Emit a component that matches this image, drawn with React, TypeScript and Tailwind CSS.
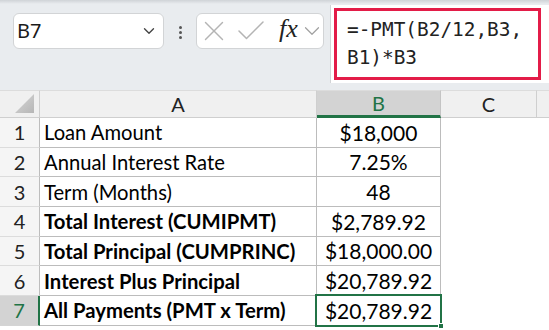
import { X, Check, ChevronDown } from "lucide-react";

const rows = [
	{ n: 1, label: "Loan Amount", value: "$18,000", bold: false },
	{ n: 2, label: "Annual Interest Rate", value: "7.25%", bold: false },
	{ n: 3, label: "Term (Months)", value: "48", bold: false },
	{ n: 4, label: "Total Interest (CUMIPMT)", value: "$2,789.92", bold: true },
	{ n: 5, label: "Total Principal (CUMPRINC)", value: "$18,000.00", bold: true },
	{ n: 6, label: "Interest Plus Principal", value: "$20,789.92", bold: true },
	{ n: 7, label: "All Payments (PMT x Term)", value: "$20,789.92", bold: true },
];

const cellFont = { fontFamily: "Lato, 'Open Sans', sans-serif" };

export default function App() {
	return (
		<div className="relative w-[549px] h-[330px] overflow-hidden bg-white">
			{/* Formula bar area */}
			<div className="relative h-[90px] bg-[#e9ecef] flex items-start">
				<div className="absolute top-0 left-0 right-0 h-[4px] bg-gradient-to-b from-[#cfd3d7] to-transparent" />

				{/* Name box */}
				<div className="ml-[13px] mt-[13px] w-[151px] h-[36px] bg-white border border-[#d2d4d6] rounded-[6px] flex items-center pl-[3px] pr-[5px]">
					<span className="flex-1 text-[20px] text-[#1a1a1a]" style={{ fontFamily: "'Noto Sans', sans-serif" }}>
						B7
					</span>
					<ChevronDown size={18} className="text-[#444]" strokeWidth={1.8} />
				</div>

				{/* Kebab dots */}
				<div className="mt-[26px] w-[32px] flex flex-col items-center gap-[2px]">
					<span className="w-[3px] h-[3px] rounded-full bg-[#555]" />
					<span className="w-[3px] h-[3px] rounded-full bg-[#555]" />
					<span className="w-[3px] h-[3px] rounded-full bg-[#555]" />
				</div>

				{/* Cancel / enter / fx */}
				<div className="mt-[13px] w-[128px] h-[36px] bg-white border border-[#d2d4d6] rounded-[6px] flex items-center">
					<X size={34} className="shrink-0 text-[#b4b4b4]" strokeWidth={1} />
					<Check size={36} className="shrink-0 ml-[2px] text-[#b4b4b4]" strokeWidth={1} />
					<span
						className="ml-[10px] text-[26px] italic text-[#222] leading-none -mt-[4px]"
						style={{ fontFamily: "'Liberation Serif', serif" }}
					>
						fx
					</span>
					<ChevronDown size={26} className="shrink-0 ml-[1px] text-[#a0a0a0]" strokeWidth={1.1} />
				</div>

				{/* Formula input */}
				<div className="ml-[6px] mt-[5px] flex-1 h-[78px] bg-white border-l border-[#d2d4d6] pt-[3px] pl-[3px]">
					<div className="w-[207px] h-[72px] border-[3px] border-[#e31c48] pl-[10px] pt-[5px]">
						<p
							className="text-[19.4px] leading-[28px] text-[#222] whitespace-pre"
							style={{ fontFamily: "'DejaVu Sans Mono', monospace" }}
						>
							{"=-PMT(B2/12,B3,\nB1)*B3"}
						</p>
					</div>
				</div>
			</div>

			{/* Grid */}
			<div className="grid grid-cols-[40px_277px_124px_96px_12px]" style={cellFont}>
				{/* Column headers */}
				<div className="h-[28px] bg-[#f0f0f0] border-r border-b border-[#cfcfcf] border-t border-t-[#dcdcdc] relative">
					<div
						className="absolute right-[5px] bottom-[4px] w-[19px] h-[19px] bg-gradient-to-br from-[#d8d8d8] to-[#b6b6b6]"
						style={{ clipPath: "polygon(100% 0, 100% 100%, 0 100%)" }}
					/>
				</div>
				<div className="h-[28px] bg-[#f0f0f0] border-r border-b border-t border-[#cfcfcf] border-t-[#dcdcdc] flex items-center justify-center text-[20px] text-[#222]">
					A
				</div>
				<div className="h-[28px] bg-[#d3d3d3] border-r border-t border-[#c4c4c4] border-t-[#dcdcdc] border-b-[3px] border-b-[#217346] flex items-center justify-center text-[20px] text-[#217346]">
					B
				</div>
				<div className="h-[28px] bg-[#f0f0f0] border-r border-b border-t border-[#cfcfcf] border-t-[#dcdcdc] flex items-center justify-center text-[20px] text-[#222]">
					C
				</div>
				<div className="h-[28px] bg-[#f0f0f0] border-b border-t border-[#cfcfcf] border-t-[#dcdcdc]" />

				{rows.map((r) => {
					const active = r.n === 7;
					return (
						<div key={r.n} className="contents">
							<div
								className={
									active
										? "h-[29.7px] bg-[#d3d3d3] border-r-2 border-r-[#217346] border-b border-b-[#d4d4d4] flex items-center justify-center text-[20px] text-[#217346]"
										: "h-[29.7px] bg-[#f5f5f5] border-r border-r-[#bdbdbd] border-b border-b-[#dcdcdc] flex items-center justify-center text-[20px] text-[#222]"
								}
							>
								{r.n}
							</div>
							<div
								className={
									r.bold
										? "h-[29.7px] border-r border-b border-[#bcbcbc] flex items-center pl-[4px] text-black whitespace-nowrap font-bold text-[20.3px]"
										: "h-[29.7px] border-r border-b border-[#bcbcbc] flex items-center pl-[4px] text-black whitespace-nowrap text-[20.2px]"
								}
							>
								{r.label}
							</div>
							<div className="relative h-[29.7px] border-r border-b border-[#bcbcbc] flex items-center justify-center text-[21px] text-black">
								{r.value}
								{active && (
									<>
										<div className="absolute -left-[2px] -top-[2px] -right-[2px] -bottom-[2px] border-2 border-[#217346]" />
										<div className="absolute -right-[4px] -bottom-[4px] w-[6px] h-[6px] bg-[#217346] border border-white" />
									</>
								)}
							</div>
							<div className="h-[29.7px]" />
							<div className="h-[29.7px]" />
						</div>
					);
				})}
			</div>
		</div>
	);
}
